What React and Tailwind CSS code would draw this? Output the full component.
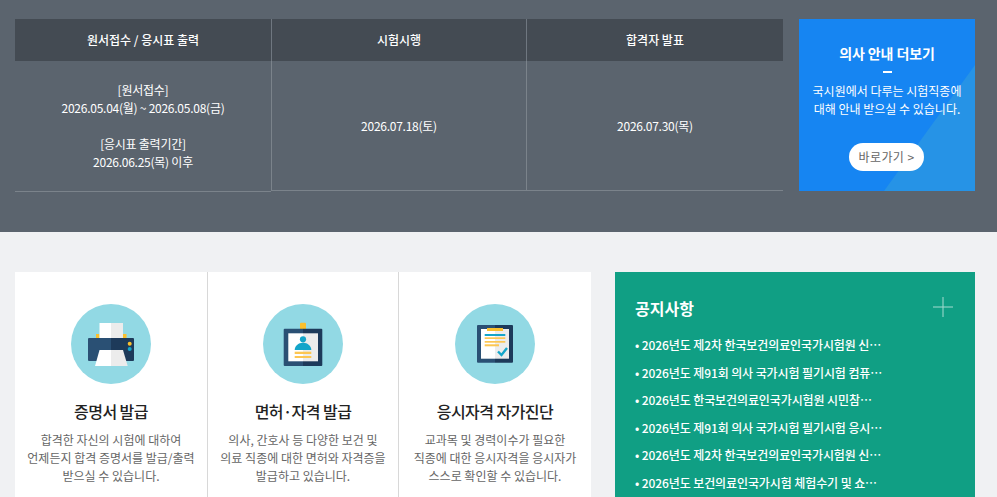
const font = { fontFamily: '"Noto Sans CJK KR", "Noto Sans", sans-serif' };

function PrinterIcon() {
  return (
    <svg width="80" height="80" viewBox="0 0 80 80">
      <circle cx="40" cy="40" r="40" fill="#92d9e4" />
      <rect x="25" y="30" width="3.500" height="5" fill="#fbc02d" />
      <rect x="52" y="30" width="3.500" height="5" fill="#fbc02d" />
      <rect x="28.500" y="19" width="11.500" height="17" fill="#ffffff" />
      <rect x="40" y="19" width="12" height="17" fill="#ececec" />
      <path d="M18 34h22v23H18a1 1 0 0 1-1-1V35a1 1 0 0 1 1-1z" fill="#2a5074" />
      <path d="M40 34h22a1 1 0 0 1 1 1v21a1 1 0 0 1-1 1H40z" fill="#1d3a5a" />
      <circle cx="58.700" cy="39.700" r="2" fill="#fbc02d" />
      <circle cx="58.700" cy="45" r="2" fill="#14a5c9" />
      <path d="M28.500 46H40v16H24z" fill="#ffffff" />
      <path d="M40 46h12l4.700 16H40z" fill="#ececec" />
    </svg>
  );
}

function BadgeIcon() {
  return (
    <svg width="80" height="80" viewBox="0 0 80 80">
      <circle cx="40" cy="40" r="40" fill="#92d9e4" />
      <rect x="37" y="18.700" width="6" height="9.500" rx="1" fill="#fbc02d" />
      <path d="M21.700 24.700H40V62H21.700a1 1 0 0 1-1-1V25.700a1 1 0 0 1 1-1z" fill="#2a5074" />
      <path d="M40 24.700h18.300a1 1 0 0 1 1 1V61a1 1 0 0 1-1 1H40z" fill="#1d3a5a" />
      <rect x="25.300" y="29.300" width="14.700" height="28" fill="#ffffff" />
      <rect x="40" y="29.300" width="15" height="28" fill="#ececec" />
      <circle cx="40" cy="35.300" r="3.100" fill="#14a5c9" />
      <path d="M31.700 46c0-4 3.500-7.300 8.300-7.300s8.300 3.300 8.300 7.300z" fill="#14a5c9" />
      <rect x="31.700" y="47.700" width="16.600" height="2.300" fill="#fcc652" />
      <rect x="31.700" y="52" width="16.600" height="2" fill="#fcc652" />
    </svg>
  );
}

function ClipboardIcon() {
  return (
    <svg width="80" height="80" viewBox="0 0 80 80">
      <circle cx="40" cy="40" r="40" fill="#92d9e4" />
      <path d="M23 21h17v37.700H23a1 1 0 0 1-1-1V22a1 1 0 0 1 1-1z" fill="#2a5074" />
      <path d="M40 21h17a1 1 0 0 1 1 1v35.700a1 1 0 0 1-1 1H40z" fill="#1d3a5a" />
      <rect x="26" y="25" width="14" height="29.700" fill="#ffffff" />
      <rect x="40" y="25" width="14" height="29.700" fill="#ececec" />
      <rect x="32" y="24" width="16" height="3" fill="#fbc02d" />
      <rect x="29.700" y="30" width="20.600" height="2" fill="#14a5c9" />
      <rect x="29.700" y="33.300" width="20.600" height="1.700" fill="#fcc652" />
      <rect x="29.700" y="37" width="20.600" height="1.700" fill="#fcc652" />
      <rect x="29.700" y="40.300" width="14.300" height="2" fill="#fcc652" />
      <path d="M43 47.500l3.500 3.500 5.500-7" fill="none" stroke="#14a5c9" strokeWidth="2.400" />
    </svg>
  );
}

function ServiceCard({ icon, title, lines, border }) {
  return (
    <div className={`flex flex-col items-center pt-8 ${border ? "border-l border-[#d8d8d8]" : ""}`}>
      {icon}
      <h3 className="mt-[15px] text-[16px] tracking-[-0.55px] leading-[24px] font-medium text-[#222222]">{title}</h3>
      <p className="mt-2 text-[12px] leading-[18px] text-[#666666] text-center whitespace-nowrap">
        {lines.map((l) => (
          <span key={l} className="block">{l}</span>
        ))}
      </p>
    </div>
  );
}

const notices = [
  "2026년도 제2차 한국보건의료인국가시험원 신…",
  "2026년도 제91회 의사 국가시험 필기시험 컴퓨…",
  "2026년도 한국보건의료인국가시험원 시민참…",
  "2026년도 제91회 의사 국가시험 필기시험 응시…",
  "2026년도 제2차 한국보건의료인국가시험원 신…",
  "2026년도 보건의료인국가시험 체험수기 및 쇼…",
];

export default function App() {
  return (
    <div style={font} className="h-[497px] overflow-hidden bg-[#f0f1f3]">
      <section className="h-[232px] bg-[#5b646e] px-[15px] pt-[19px] flex items-start">
        <div className="w-[768px] text-[#ffffff] text-[12px] leading-[18px] flex flex-col">
          <div className="grid grid-cols-[256px_255px_257px] h-[42px] bg-[#444b53] font-medium items-center text-center">
            <div className="h-full flex items-center justify-center">원서접수 / 응시표 출력</div>
            <div className="h-full flex items-center justify-center border-l border-[#6f7780]">시험시행</div>
            <div className="h-full flex items-center justify-center border-l border-[#6f7780]">합격자 발표</div>
          </div>
          <div className="grid grid-cols-[256px_255px_257px] h-[131px] text-center tracking-[-0.25px] items-start">
            <div className="h-[131px] flex items-center justify-center border-b border-[#7b838b]">
              <p>
                [원서접수]<br />
                2026.05.04(월) ~ 2026.05.08(금)<br />
                <br />
                [응시표 출력기간]<br />
                2026.06.25(목) 이후
              </p>
            </div>
            <div className="h-[130px] flex items-center justify-center border-l border-b border-[#7b838b] pt-[1px]">2026.07.18(토)</div>
            <div className="h-[130px] flex items-center justify-center border-l border-b border-[#7b838b] pt-[1px]">2026.07.30(목)</div>
          </div>
        </div>
        <aside className="relative ml-4 w-[176px] h-[172px] bg-[#1685f2] overflow-hidden text-white flex flex-col items-center">
          <svg className="absolute inset-0" width="176" height="172" viewBox="0 0 176 172">
            <polygon points="176,46 176,172 85,172" fill="#2693e6" />
          </svg>
          <h3 className="relative mt-[22px] text-[14px] tracking-[-0.1px] leading-[24px] font-bold">의사 안내 더보기</h3>
          <span className="relative mt-[6px] block w-[9px] h-[2px] bg-white" />
          <p className="relative mt-[9px] text-[12px] leading-[18px] text-center whitespace-nowrap">
            국시원에서 다루는 시험직종에<br />대해 안내 받으실 수 있습니다.
          </p>
          <a className="relative mt-[25px] mr-[1px] w-[75px] h-[28px] rounded-full bg-white text-[#666666] text-[12px] tracking-[0.4px] flex items-center justify-center">
            바로가기 &gt;
          </a>
        </aside>
      </section>
      <section className="px-[15px] pt-10 flex gap-6">
        <div className="w-[576px] h-[260px] bg-white grid grid-cols-[192px_191px_193px]">
          <ServiceCard
            icon={<PrinterIcon />}
            title="증명서 발급"
            lines={["합격한 자신의 시험에 대하여", "언제든지 합격 증명서를 발급/출력", "받으실 수 있습니다."]}
          />
          <ServiceCard
            border
            icon={<BadgeIcon />}
            title="면허·자격 발급"
            lines={["의사, 간호사 등 다양한 보건 및", "의료 직종에 대한 면허와 자격증을", "발급하고 있습니다."]}
          />
          <ServiceCard
            border
            icon={<ClipboardIcon />}
            title="응시자격 자가진단"
            lines={["교과목 및 경력이수가 필요한", "직종에 대한 응시자격을 응시자가", "스스로 확인할 수 있습니다."]}
          />
        </div>
        <div className="w-[360px] h-[260px] bg-[#109f84] px-5 pt-[23px] text-white">
          <div className="flex items-center justify-between">
            <h3 className="text-[16px] leading-[26px] font-bold">공지사항</h3>
            <svg width="20" height="20" viewBox="0 0 20 20" className="mr-[2px] -mt-[3px]">
              <path d="M10 0v20M0 10h20" stroke="#a5dbd0" strokeWidth="1" />
            </svg>
          </div>
          <ul className="mt-[10px] text-[12px] font-medium tracking-[-0.1px]">
            {notices.map((n, i) => (
              <li key={i} className="h-[27.500px] leading-[27.500px] whitespace-nowrap">• {n}</li>
            ))}
          </ul>
        </div>
      </section>
    </div>
  );
}
